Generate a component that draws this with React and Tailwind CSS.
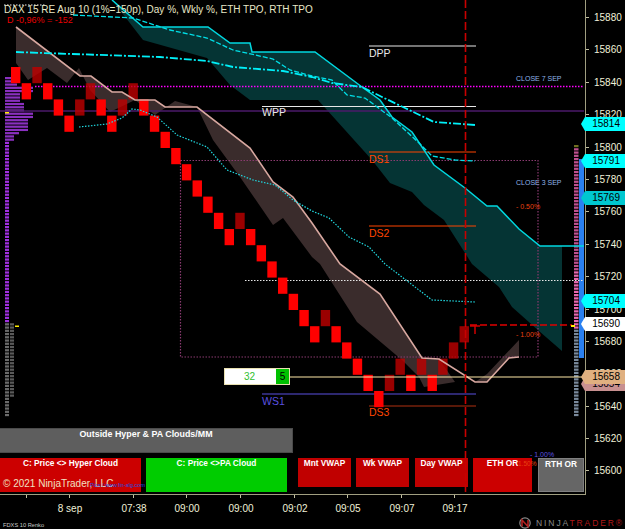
import React from "react";

const sans = "font-['Liberation_Sans',Arial,sans-serif]";

const rows = [0, 1, 0, 1, 2, 3, 2, 1, 2, 3, 2, 1, 2, 3, 4, 5, 6, 7, 8, 9, 10, 9, 10, 11, 12, 13, 14, 15, 16, 15, 16, 17, 18, 19, 20, 19, 18, 19, 18, 19, 18, 17, 16];
const darkBars = [2, 6, 7, 10, 11, 21, 29, 35, 36, 38, 40, 41, 42];

const prices = [15880, 15860, 15840, 15820, 15800, 15780, 15760, 15740, 15720, 15700, 15680, 15660, 15640, 15620, 15600];
const times = [
  { w: "w-[27px]", label: "" },
  { w: "w-[43px]", label: "8 sep" },
  { w: "w-[64px]", label: "07:38" },
  { w: "w-[53px]", label: "09:00" },
  { w: "w-[54px]", label: "09:00" },
  { w: "w-[54px]", label: "09:02" },
  { w: "w-[53px]", label: "09:05" },
  { w: "w-[54px]", label: "09:07" },
  { w: "w-[53px]", label: "09:17" },
];

const tags = [
  { price: "15654", top: "top-[377px]", bg: "#c89090" },
  { price: "15814", top: "top-[117px]", bg: "#00ffff" },
  { price: "15791", top: "top-[154px]", bg: "#00ffff" },
  { price: "15769", top: "top-[191px]", bg: "#00c8d0" },
  { price: "15704", top: "top-[294px]", bg: "#00ffff" },
  { price: "15690", top: "top-[317px]", bg: "#ffffff" },
  { price: "15658", top: "top-[370px]", bg: "#e0b080" },
];

const levels = [
  { x1: 369, y: 46, color: "#e8e8e8", label: "DPP", ty: 57, tx: 369 },
  { x1: 262, y: 106.5, color: "#e8e8e8", label: "WPP", ty: 116, tx: 262 },
  { x1: 369, y: 152, color: "#ff4500", label: "DS1", ty: 163, tx: 369 },
  { x1: 369, y: 226, color: "#ff4500", label: "DS2", ty: 237, tx: 369 },
  { x1: 262, y: 394, color: "#5a50e0", label: "WS1", ty: 405, tx: 262 },
  { x1: 369, y: 406, color: "#b03010", label: "DS3", ty: 416, tx: 369, tc: "#ff4500" },
];

// volume profile, left side: right edge of each row from y=77 down
const leftProfile = Array.from({ length: 105 }, (_, i) => {
  const y = 77 + i * 3.24;
  let w = 9;
  if (y < 85) w = 17;
  else if (y < 92) w = 33;
  else if (y < 100) w = 20;
  else if (y < 110) w = 24;
  else if (y < 116) w = 33;
  else if (y < 131) w = 28;
  else if (y < 135) w = 19;
  else if (y < 141) w = 14;
  return { y, w };
});

const rightProfile = Array.from({ length: 84 }, (_, i) => 145 + i * 3.24);

const Chart = () => (
  <svg viewBox="0 0 585 494" className={`absolute inset-0 w-[585px] h-[494px] ${sans}`}>
    {/* clouds */}
    <path
      d="M112 0 L143 27 L208 27 L230 43 L250 43 L252 52 L315 52 L362 87 L380 100 L392 117 L412 132 L434 165 L465 188 L487 206 L497 206 L519 229 L540 246 L562 246 L562 351 L539 331 L512 307 L499 287 L472 264 L465 253 L444 220 L424 205 L412 192 L390 183 L372 160 L345 130 L318 100 L250 100 L230 85 L207 58 L143 40 Z"
      fill="#053434"
    />
    <path
      d="M16 27 L80 76 L91 76 L112 92 L122 92 L135 100 L155 100 L165 107 L197 107 L250 148 L273 182 L293 197 L312 223 L340 264 L380 294 L422 358 L439 359 L455 382 L424 387 L419 377 L402 360 L357 322 L320 264 L312 257 L283 218 L273 225 L240 177 L213 140 L197 107 L175 101 L155 115 L135 100 L110 112 L90 90 L79 68 L67 83 L47 68 L28 80 L16 63 Z"
      fill="#3a2c2c"
    />
    <path d="M475 382 L487 374 L519 340 L519 357 L509 358 L487 382 Z" fill="#3a2c2c" />

    {/* profile left */}
    {leftProfile.map(({ y, w }) => (
      <g key={y}>
        <rect x="5" y={y} width={y > 322 ? 4 : w - 5} height="2.2" fill={y > 322 ? "#6a6a6a" : y > 140 ? "#a030e0" : "#8a30c0"} />
        {y > 322 && y < 396 && <rect x="10" y={y} width="4" height="2.2" fill="#5a5a5a" />}
      </g>
    ))}
    <rect x="5" y="112" width="4" height="1.5" fill="#ffee00" />
    <rect x="15" y="325.5" width="4" height="1.5" fill="#ffee00" />

    {/* profile right */}
    {rightProfile.map((y) => (
      <rect key={y} x="574" y={y} width="4.5" height="2.2" fill={y < 148 ? "#707020" : y > 329 ? "#7a8a9c" : y > 270 ? "#e868b0" : "#c05090"} />
    ))}
    <rect x="579" y="159" width="5" height="199" fill="#2a80f0" />

    {/* level lines */}
    <line x1="4" y1="5" x2="45" y2="5" stroke="#f0f0f0" strokeDasharray="1.5 1.5" />
    <rect x="180.5" y="160.5" width="357.5" height="196.5" fill="none" stroke="#8a3a70" strokeWidth="1.2" strokeDasharray="1.5 1.5" />
    <line x1="245" y1="280.5" x2="584" y2="280.5" stroke="#e8e8e8" strokeDasharray="1.5 1.5" />
    <line x1="35" y1="86.5" x2="584" y2="86.5" stroke="#ff00ff" strokeWidth="1.5" strokeDasharray="1.5 1.5" />
    <line x1="0" y1="111" x2="584" y2="111" stroke="#4b1a6a" strokeWidth="1.5" />
    {levels.map((l) => (
      <g key={l.label}>
        <line x1={l.x1} y1={l.y} x2="476" y2={l.y} stroke={l.color} />
        <text x={l.tx} y={l.ty} fontSize="10.5" fill={l.tc || l.color}>
          {l.label}
        </text>
      </g>
    ))}

    {/* renko bars */}
    {rows.map((r, i) =>
      darkBars.includes(i) ? (
        <rect key={i} x={11 + i * 10.68} y={67 + r * 16.2} width="9.4" height="16.2" fill="#c00000" fillOpacity="0.8" />
      ) : (
        <rect key={i} x={11 + i * 10.68} y={67 + r * 16.2} width="9.4" height="16.2" fill="#ff0000" />
      )
    )}
    <path d="M470 326 L480 326 M475 326 L475 334" stroke="#d00000" strokeWidth="1.5" fill="none" />

    {/* indicator lines */}
    <polyline
      points="112,0 143,27 208,27 230,43 250,43 252,52 315,52 362,87 380,100 392,117 412,132 434,165 465,188 487,206 497,206 519,229 540,246 584,246"
      fill="none"
      stroke="#00d8e0"
      strokeWidth="1.5"
    />
    <polyline
      points="16,27 80,76 91,76 112,92 122,92 135,100 155,100 165,107 197,107 250,148 273,182 293,197 312,223 340,264 380,294 422,358 439,359 475,382 487,382 509,358 519,357"
      fill="none"
      stroke="#d8a8a0"
      strokeWidth="1.6"
    />
    <polyline
      points="79,127 107,124 122,118 132,109 140,110 157,117 177,135 207,147 227,170 253,180 275,185 293,200 312,211 329,218 349,237 369,247 385,264 432,300 475,302"
      fill="none"
      stroke="#20d8e0"
      strokeWidth="1.2"
      strokeDasharray="1.5 1.5"
    />
    <polyline
      points="73,15 133,18 170,30 207,38 233,50 273,59 290,70 312,76 332,80 347,95 365,98 392,118 419,143 432,156 455,160 475,161"
      fill="none"
      stroke="#00e0e8"
      strokeWidth="1.3"
      strokeDasharray="5 2"
    />
    <polyline
      points="16,52 43,53 160,57 207,61 233,67 283,71 312,77 332,83 362,87 382,97 405,108 434,122 475,125"
      fill="none"
      stroke="#00f0f8"
      strokeWidth="1.8"
      strokeDasharray="8 2 2 2"
    />
    <line x1="290" y1="377" x2="584" y2="377" stroke="#ffe9a8" />
    <line x1="470" y1="325" x2="572" y2="325" stroke="#e00000" strokeWidth="1.6" strokeDasharray="7 3" />
    <rect x="571" y="325" width="4" height="2" fill="#ffee00" />
    <line x1="465.5" y1="0" x2="465.5" y2="493" stroke="#c80000" strokeWidth="1.6" strokeDasharray="8 3" />

    {/* small chart labels */}
    <text x="516" y="81" fontSize="7" fill="#90b4e8">CLOSE 7 SEP</text>
    <text x="516" y="185" fontSize="7" fill="#90b4e8">CLOSE 3 SEP</text>
    <text x="516" y="209" fontSize="7" fill="#e84010">- 0.50%</text>
    <text x="516" y="337" fontSize="7" fill="#e84010">- 1.00%</text>
    <text x="530" y="457" fontSize="7" fill="#5a50e0">- 1.00%</text>
  </svg>
);

const Btn = ({ className, children }) => (
  <div className={`text-center text-white font-bold text-[8.3px] leading-[10px] ${className}`}>{children}</div>
);

const Logo = () => (
  <div className="flex items-center gap-[5px]">
    <svg viewBox="0 0 12 12" className="w-[12px] h-[12px]">
      <circle cx="6" cy="6" r="5.2" fill="none" stroke="#8a8a8a" strokeWidth="1.2" />
      <path d="M3 9.5 L3 3 L9 9.5 L9 3" fill="none" stroke="#b02020" strokeWidth="1.6" />
    </svg>
    <span className="text-[8.5px] leading-none tracking-[1.9px] text-[#8a8a8a]">
      NINJA<span className="text-[#b01818]">TRADER®</span>
    </span>
  </div>
);

export default function App() {
  return (
    <div className={`w-[625px] h-[529px] bg-black overflow-hidden flex flex-col ${sans}`}>
      <div className="flex h-[495px]">
        <div className="relative w-[586px] h-[495px] border-r border-b border-[#a09e80]">
          {/* indicator buttons */}
          <div className="absolute left-0 top-[428px] flex flex-col gap-[5px]">
            <Btn className="w-[293px] h-[25px] bg-[#5e5e5e] border border-[#4a4a4a] border-l-0 text-[8.9px]">
              Outside Hyper &amp; PA Clouds/MM
            </Btn>
            <div className="flex items-start">
              <Btn className="w-[141px] h-[34px] bg-[#cc0000]">C: Price &lt;&gt; Hyper Cloud</Btn>
              <Btn className="w-[141px] h-[34px] ml-[5px] bg-[#00cc00]">C: Price &lt;&gt;PA Cloud</Btn>
              <Btn className="w-[53px] h-[29px] ml-[11px] bg-[#c00000]">Mnt VWAP</Btn>
              <Btn className="w-[53px] h-[29px] ml-[5px] bg-[#c00000]">Wk VWAP</Btn>
              <Btn className="w-[53px] h-[29px] ml-[6px] bg-[#c00000]">Day VWAP</Btn>
              <Btn className="w-[59px] h-[34px] ml-[5px] bg-[#cc0000]">ETH OR</Btn>
              <Btn className="w-[46px] h-[34px] ml-[6px] bg-[#666666] border border-[#808080]">RTH OR</Btn>
            </div>
          </div>
          <Chart />

          <div className="absolute left-[4px] top-[3px] text-[10px] leading-[13px] text-[#e8e8c8] whitespace-nowrap">
            DAX 15 RE Aug 10 (1%=150p), Day %, Wkly %, ETH TPO, RTH TPO
          </div>
          <div className="absolute left-[7px] top-[14px] text-[9px] leading-[12px] text-[#e80000] whitespace-nowrap">
            D -0,96% = -152
          </div>

          <div className="absolute left-[224px] top-[368px] w-[66px] h-[17px] flex bg-white border border-[#e8e0b0] text-[10px] leading-[15px]">
            <span className="flex-1 text-center text-[#30c030] pr-[2px]">32</span>
            <span className="w-[13px] bg-[#00c000] text-center text-black">5</span>
          </div>

          <div className="absolute left-[3px] top-[477px] text-[10px] leading-[13px] text-[#f0e0c0] whitespace-nowrap">
            © 2021 NinjaTrader, LLC
          </div>
          <div className="absolute left-[90px] top-[482px] text-[5.5px] leading-[7px] text-[#2050e0] whitespace-nowrap">
            Pics / www.fin-alg.com
          </div>
          <div className="absolute left-[518px] top-[460px] text-[6.5px] leading-[8px] text-[#e84010]">1.50%</div>
        </div>

        {/* price axis */}
        <div className="relative flex-1">
          <div className="flex flex-col pt-[10px]">
            {prices.map((p) => (
              <div key={p} className="h-[32.4px] flex items-start">
                <span className="mt-[7px] w-[3px] h-px bg-[#c0bea0]" />
                <span className="ml-[5px] text-[10px] leading-[15px] text-[#f0f0d8]">{p}</span>
              </div>
            ))}
          </div>
          {tags.map((t) => (
            <div
              key={t.price}
              className={`absolute -left-[5px] ${t.top} w-[44px] h-[14px] flex items-center justify-end pr-[5px] text-[10px] leading-none text-black [clip-path:polygon(4px_0,100%_0,100%_100%,4px_100%,0_50%)]`}
              style={{ backgroundColor: t.bg }}
            >
              {t.price}
            </div>
          ))}
        </div>
      </div>

      {/* time axis */}
      <div className="h-[34px] relative">
        <div className="flex h-[3px]">
          {times.map((t, i) => (
            <span key={i} className={`${t.w} flex justify-end`}>
              <span className="w-px h-[3px] bg-[#c0bea0]" />
            </span>
          ))}
        </div>
        <div className="flex pt-[4px] text-[10px] leading-[13px] text-[#f0f0d8]">
          {times.map((t, i) => (
            <span key={i} className={`${t.w} text-right whitespace-nowrap`}>
              <span className="inline-block translate-x-[50%]">{t.label}</span>
            </span>
          ))}
        </div>
        <div className="flex items-end justify-between pl-[3px] pr-[1px] pt-[2px]">
          <span className="text-[5.7px] leading-[8px] text-[#c8c8c8]">FDXS 10 Renko</span>
          <Logo />
        </div>
      </div>
    </div>
  );
}
